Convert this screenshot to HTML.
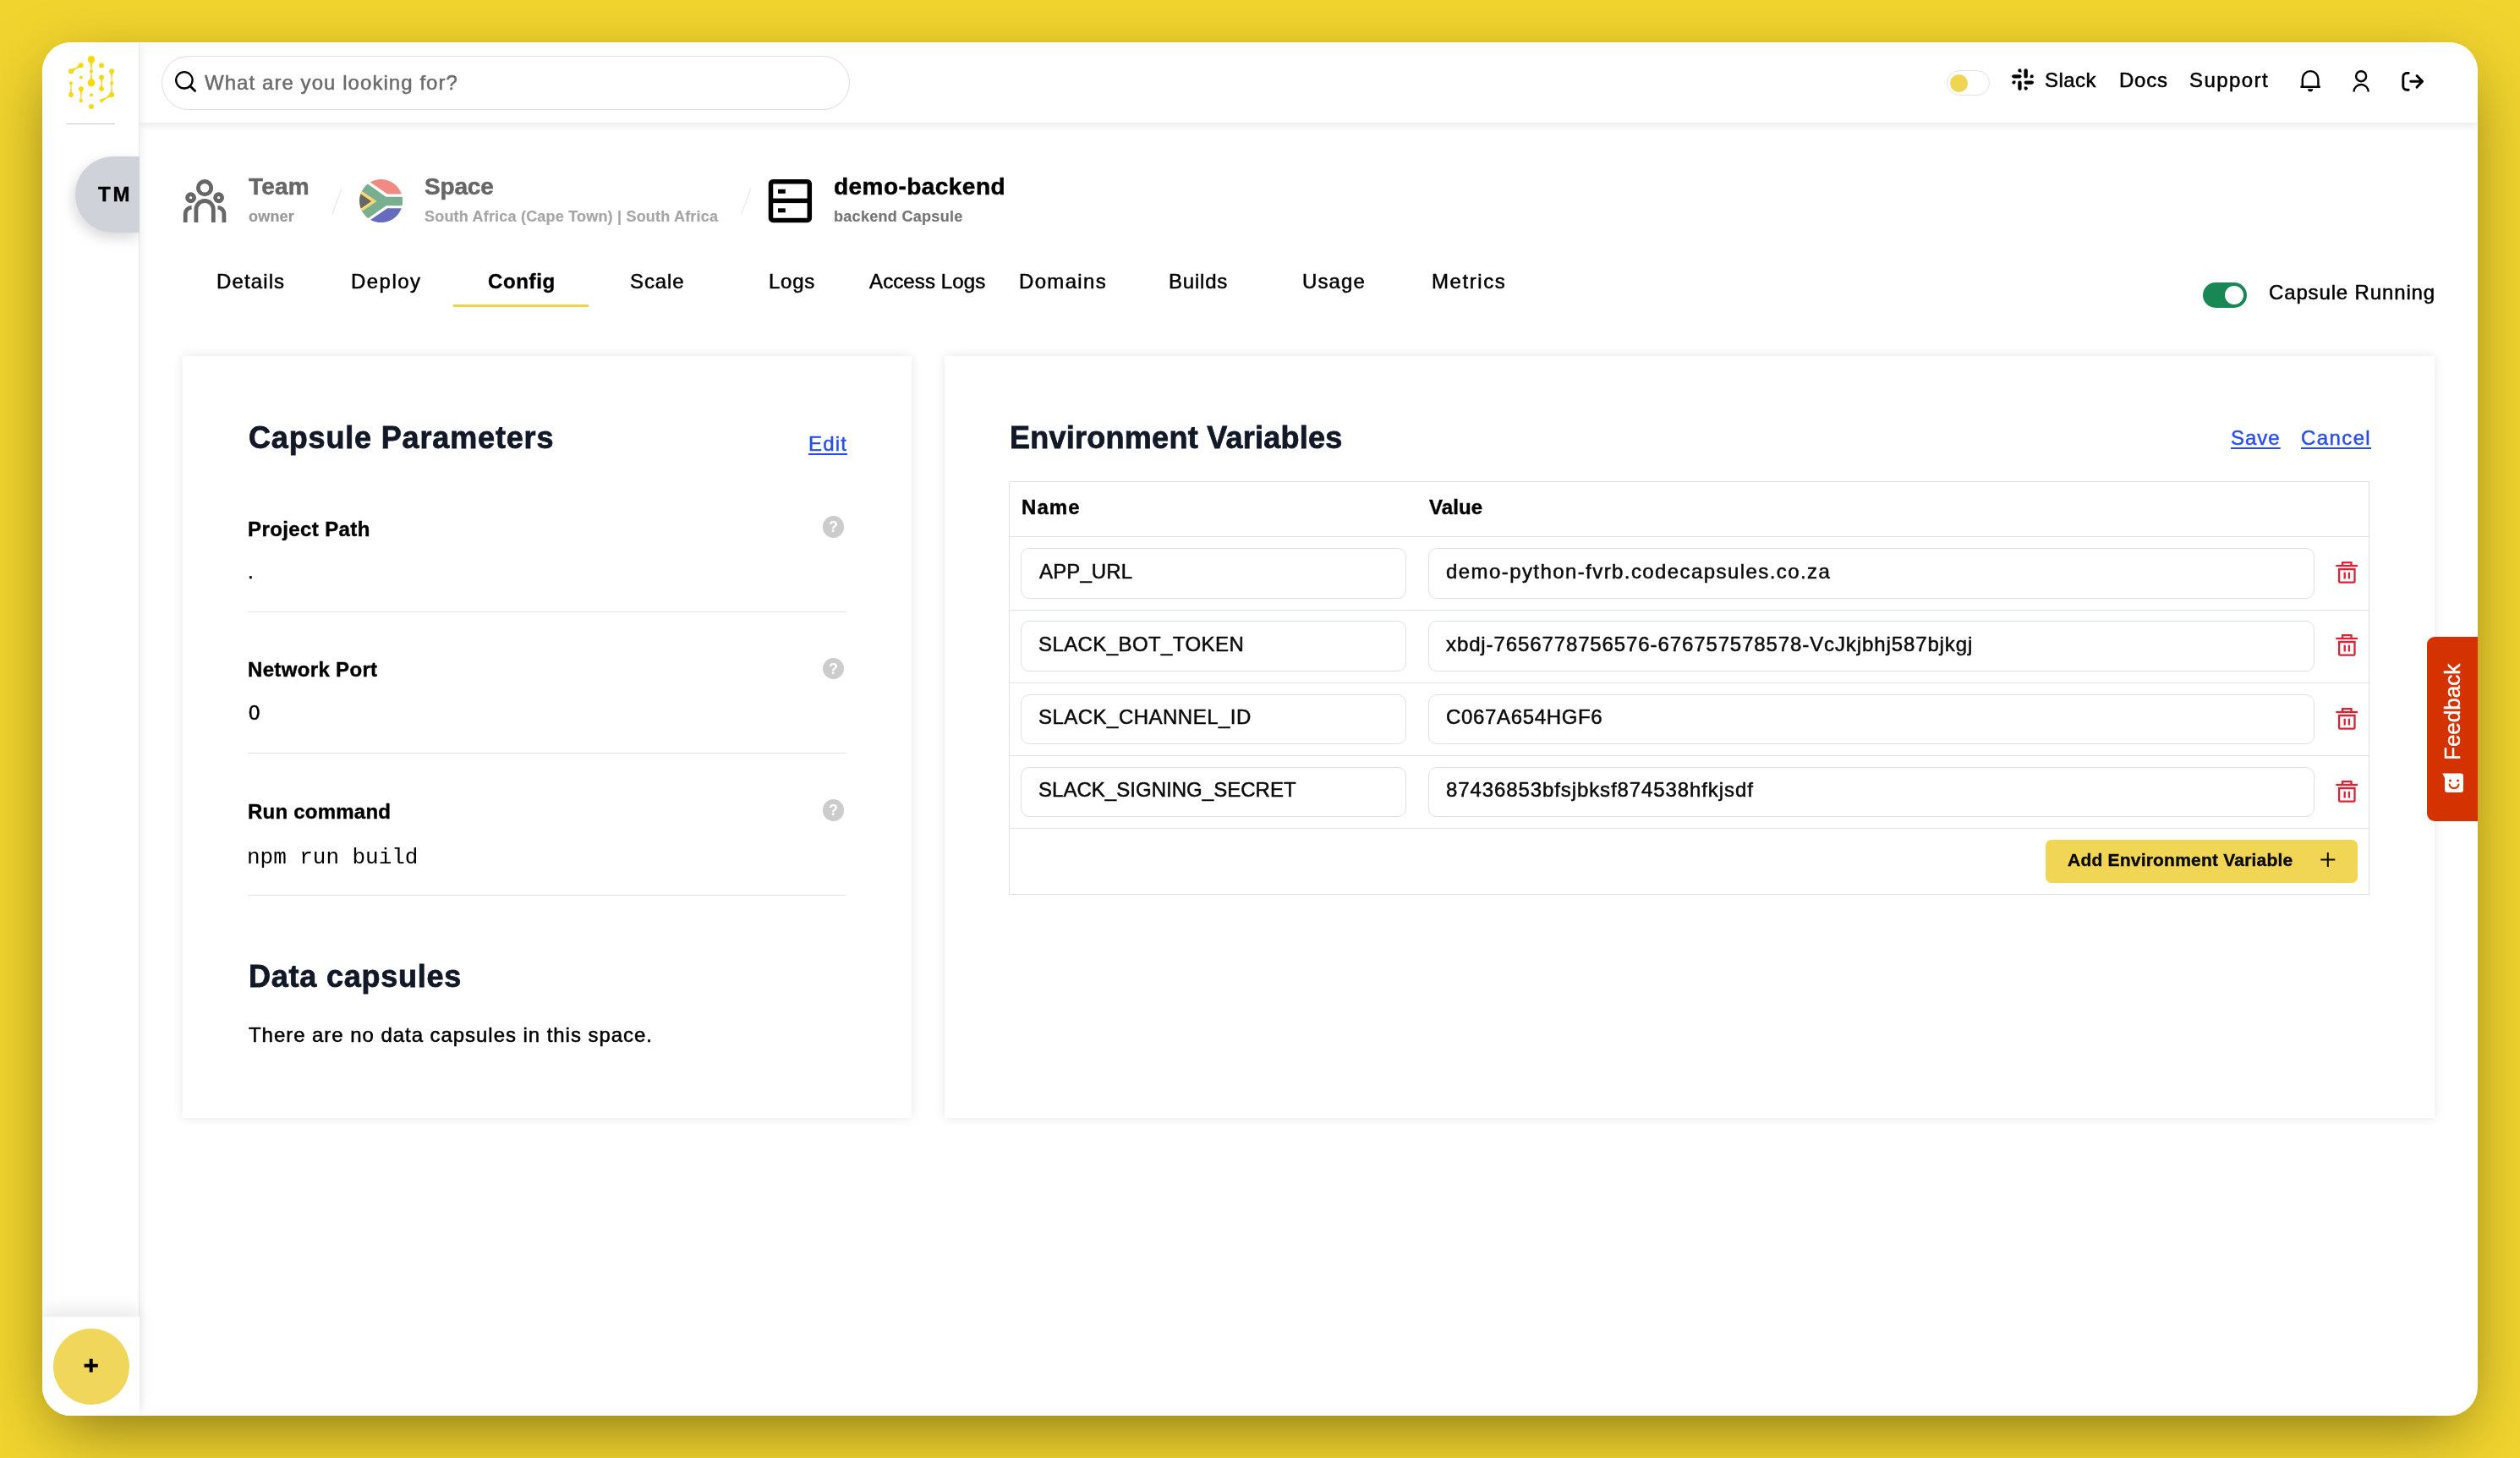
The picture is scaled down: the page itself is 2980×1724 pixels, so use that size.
<!DOCTYPE html>
<html lang="en">
<head>
<meta charset="utf-8">
<title>Code Capsules - demo-backend - Config</title>
<style>
html,body{margin:0;padding:0}
body{width:2980px;height:1724px;overflow:hidden;background:#f1d42e;position:relative;font-family:"Liberation Sans",Arial,sans-serif}
.win{position:absolute;left:50px;top:50px;width:2880px;height:1624px;background:#fff;border-radius:34px;box-shadow:0 24px 80px -16px rgba(0,0,0,.5);overflow:hidden}
.page{will-change:transform;position:absolute;left:-50px;top:-50px;width:2980px;height:1724px}
.page *{box-sizing:border-box}
.a{position:absolute}
.t{z-index:6;position:absolute;margin:0;padding:0;white-space:pre;line-height:1;display:block}
.topbar{left:165px;top:50px;width:2765px;height:95px;background:#fff;box-shadow:0 3px 10px rgba(0,0,0,.10);z-index:2}
.sidebar{left:50px;top:50px;width:115px;height:1624px;background:#fff;border-right:1px solid #e9e9e9;box-shadow:2px 0 9px rgba(0,0,0,.07);z-index:3}
.sfoot{left:50px;top:1557px;width:115px;height:117px;background:#fff;box-shadow:0 -10px 18px rgba(0,0,0,.08);z-index:4}
.z5{z-index:5}
.search{left:191px;top:66px;width:814px;height:64px;border:1px solid #d9dee4;border-radius:32px;background:#fff}
.card{background:#fff;box-shadow:0 0 12px rgba(0,0,0,.10)}
.hr{height:1px;background:#dfe3e8}
.inp{height:60px;border:1px solid #dde1e6;border-radius:10px;background:#fff}
.help{width:25.5px;height:25.5px;border-radius:50%;background:#ccc;color:#fff;font:700 18px/27.5px "Liberation Sans",Arial,sans-serif;text-align:center}

</style>
</head>
<body>
<div class="win"><div class="page">
<!-- main chrome -->
<div class="a topbar"></div>
<div class="a sidebar"></div>
<div class="a sfoot"></div>

<!-- logo -->
<svg class="a z5" style="left:68px;top:56px" width="80" height="80" viewBox="0 0 1458 1458">
 <g stroke="#f3dc55" stroke-width="28" stroke-linecap="round">
  <line x1="728" y1="262" x2="728" y2="765"/><line x1="508" y1="895" x2="508" y2="1150"/>
  <line x1="290" y1="770" x2="290" y2="1020"/><line x1="948" y1="645" x2="948" y2="895"/>
  <line x1="1168" y1="515" x2="1168" y2="1020"/>
 </g>
 <g fill="#f6d915">
  <path d="M531 423.600L405.100 460.300L313 553.600L267 476.400L392.900 439.700L485 346.400Z"/>
  <path d="M1190.900 1058.700L1064.100 1095.300L964.300 1177.600L931.700 1122.400L1051.900 1074.700L1145.100 981.300Z"/>
  <path d="M690 300 L728 470 L766 300Z"/><path d="M690 730 L728 600 L766 730Z"/>
  <path d="M480 930 L508 1040 L536 930Z"/><path d="M920 680 L948 780 L976 680Z"/><path d="M920 860 L948 780 L976 860Z"/>
  <path d="M262 990 L290 890 L318 990Z"/><path d="M1140 550 L1168 650 L1196 550Z"/><path d="M1140 990 L1168 890 L1196 990Z"/>
  <circle cx="728" cy="262" r="78"/><circle cx="728" cy="515" r="36"/><circle cx="728" cy="765" r="80"/>
  <circle cx="728" cy="1025" r="36"/><circle cx="728" cy="1275" r="54"/>
  <circle cx="508" cy="385" r="54"/><circle cx="508" cy="645" r="36"/><circle cx="508" cy="895" r="54"/><circle cx="508" cy="1150" r="38"/>
  <circle cx="290" cy="515" r="54"/><circle cx="290" cy="770" r="38"/><circle cx="290" cy="1020" r="54"/>
  <circle cx="948" cy="390" r="54"/><circle cx="948" cy="645" r="54"/><circle cx="948" cy="895" r="54"/><circle cx="948" cy="1150" r="38"/>
  <circle cx="1168" cy="515" r="54"/><circle cx="1168" cy="770" r="36"/><circle cx="1168" cy="1020" r="54"/>
 </g>
</svg>
<div class="a z5" style="left:79px;top:146px;width:57px;height:1px;background:#c9c9c9"></div>

<!-- team pill -->
<div class="a z5" style="left:50px;top:150px;width:115px;height:180px;overflow:hidden"><div class="a" style="left:39px;top:35px;width:76px;height:90px;background:#cfd2d8;border-radius:45px 0 0 45px;box-shadow:-2px 6px 16px rgba(0,0,0,.16)"></div></div>

<!-- plus button -->
<div class="a z5" style="left:63px;top:1571px;width:90px;height:90px;border-radius:50%;background:#f0d65a"></div>
<svg class="a z5" style="left:99px;top:1606px" width="18" height="18" viewBox="0 0 18 18"><path d="M8.7 .8V16.6M.6 8.7H16.8" stroke="#000" stroke-width="4" fill="none"/></svg>

<!-- search -->
<div class="a search z5"></div>
<svg class="a z5" style="left:204px;top:81px" width="32" height="32" viewBox="0 0 32 32"><circle cx="13.9" cy="13.8" r="9.7" fill="none" stroke="#000" stroke-width="2.3"/><path d="M20.8 20.8L26.6 26.6" stroke="#000" stroke-width="2.8" stroke-linecap="round"/></svg>

<!-- theme toggle -->
<div class="a z5" style="left:2302px;top:83px;width:51px;height:30px;border:1px solid #dfe3ea;border-radius:15px;background:#fff"></div>
<div class="a z5" style="left:2306px;top:88px;width:21px;height:21px;border-radius:50%;background:#efd551"></div>

<!-- slack icon -->
<svg class="a z5" style="left:2378.8px;top:80.8px" width="26" height="26" viewBox="0 0 26 26" fill="#000">
 <rect x="14.4" y=".2" width="4.4" height="11.2" rx="2.2"/>
 <rect x=".1" y="7.2" width="11.4" height="4.2" rx="2.1"/>
 <rect x="7.3" y="14.5" width="4.3" height="11.4" rx="2.15"/>
 <rect x="14.6" y="14.5" width="11.4" height="4.2" rx="2.1"/>
 <path d="M11.5 4.3V2.4a2.1 2.1 0 1 0 -2.1 2.1h2.1z"/>
 <path d="M21.7 11.3h2.1a2.05 2.05 0 1 0 -2.1 -2.05v2.05z"/>
 <path d="M4.5 14.5H2.3a2.05 2.05 0 1 0 2.2 2.05V14.5z"/>
 <path d="M14.6 21.5v2.1a2.1 2.1 0 1 0 2.1 -2.1h-2.1z"/>
</svg>

<!-- bell -->
<svg class="a z5" style="left:2716px;top:78px" width="34" height="34" viewBox="2716 78 34 34" fill="none" stroke="#000" stroke-width="2.4" stroke-linecap="round">
 <path d="M2722.8 102.7V93.4a9.3 9.3 0 0 1 18.6 0V102.7"/><path d="M2721.4 102.7H2742.9"/>
 <path d="M2729 105.2h6.2a3.1 3.1 0 0 1 -6.2 0z" fill="#000" stroke="none"/>
</svg>
<!-- user -->
<svg class="a z5" style="left:2776px;top:78px" width="34" height="34" viewBox="2776 78 34 34" fill="none" stroke="#000" stroke-width="2.4">
 <circle cx="2792.1" cy="90.2" r="6"/><path d="M2783.5 108.6a8.6 8.6 0 0 1 17.2 0"/>
</svg>
<!-- logout -->
<svg class="a z5" style="left:2836px;top:80px" width="34" height="34" viewBox="2836 80 34 34" fill="none" stroke="#000" stroke-width="2.9" stroke-linecap="round" stroke-linejoin="round">
 <path d="M2848.2 86.5H2846a4.2 4.2 0 0 0 -4.2 4.2V102a4.2 4.2 0 0 0 4.2 4.2h2.2"/>
 <path d="M2850.7 96.3H2864.2M2858 89.5L2864.6 96.3L2858 103.1"/>
</svg>

<!-- breadcrumb: team icon -->
<svg class="a" style="left:210px;top:206px" width="64" height="64" viewBox="210 206 64 64" fill="none" stroke="#666" stroke-width="4.8">
 <circle cx="242.06" cy="222.2" r="7.7"/>
 <circle cx="225.6" cy="233.7" r="4.05"/><circle cx="258.6" cy="233.7" r="4.05"/>
 <path d="M231.9 262.9V247.7a10.2 10.2 0 0 1 20.4 0V262.9"/>
 <path d="M226.6 245.4a7.4 7.4 0 0 0 -7.4 7.4V262.9"/>
 <path d="M257.5 245.4a7.4 7.4 0 0 1 7.4 7.4V262.9"/>
</svg>
<svg class="a" style="left:388px;top:218px" width="22" height="40" viewBox="388 218 22 40"><path d="M403.9 223L393 253" stroke="#e2e2e2" stroke-width="1"/></svg>
<svg class="a" style="left:872px;top:218px" width="22" height="40" viewBox="872 218 22 40"><path d="M888 223L876.8 253" stroke="#e2e2e2" stroke-width="1"/></svg>

<!-- flag -->
<svg class="a" style="left:425px;top:211.8px" width="51.2" height="51.2" viewBox="0 0 512 512">
 <defs><clipPath id="fc"><circle cx="256" cy="256" r="256"/></clipPath></defs>
 <g clip-path="url(#fc)">
  <rect width="512" height="512" fill="#fff"/>
  <path d="M131 0H512V174H331L100 16Z" fill="#f08a82"/>
  <path d="M131 512H512V343H331L100 500Z" fill="#676bbd"/>
  <path d="M-40 -40L103 57L314 207H512V313H317L106 460L-40 560L-60 400L142 260L-60 120Z" fill="#78af91"/>
  <path d="M0 120L30.600 140L205 260L30.600 377L0 400V346L14 346L142 260L14 174L0 174Z" fill="#fbd76d"/>
  <path d="M-20 150L142 260L-20 370Z" fill="#666"/>
 </g>
</svg>

<!-- capsule icon -->
<svg class="a" style="left:904px;top:208px" width="60" height="60" viewBox="904 208 60 60">
 <rect x="911.5" y="214.8" width="45.8" height="45.6" rx="2.5" fill="none" stroke="#000" stroke-width="5.5"/>
 <rect x="911.5" y="234.6" width="45.8" height="5.5" fill="#000"/>
 <rect x="920" y="223.8" width="8.8" height="5" fill="#000"/><rect x="920" y="246.3" width="8.8" height="5" fill="#000"/>
</svg>

<!-- tab underline -->
<div class="a" style="left:536px;top:360px;width:160px;height:3px;background:#efd44a"></div>

<!-- running toggle -->
<div class="a" style="left:2605px;top:334px;width:52px;height:30px;border-radius:15px;background:#198754"></div>
<div class="a" style="left:2630.500px;top:338px;width:22px;height:22px;border-radius:50%;background:#fff"></div>

<!-- cards -->
<div class="a card" style="left:216px;top:421px;width:862px;height:900.5px"></div>
<div class="a card" style="left:1117px;top:421px;width:1762px;height:900.5px"></div>

<!-- left card lines + help -->
<div class="a hr" style="left:293px;top:723px;width:708px"></div>
<div class="a hr" style="left:293px;top:890px;width:708px"></div>
<div class="a hr" style="left:293px;top:1058px;width:708px"></div>
<div class="a help" style="left:972.800px;top:610.400px">?</div>
<div class="a help" style="left:972.800px;top:777.800px">?</div>
<div class="a help" style="left:972.800px;top:945.400px">?</div>

<!-- table -->
<div class="a" style="left:1193px;top:569px;width:1609px;height:489px;border:1px solid #dce1e7"></div>
<div class="a hr" style="left:1193px;top:634px;width:1609px"></div>
<div class="a hr" style="left:1193px;top:721px;width:1609px"></div>
<div class="a hr" style="left:1193px;top:807px;width:1609px"></div>
<div class="a hr" style="left:1193px;top:893px;width:1609px"></div>
<div class="a hr" style="left:1193px;top:979px;width:1609px"></div>
<div class="a inp" style="left:1207px;top:648px;width:456px"></div>
<div class="a inp" style="left:1689px;top:648px;width:1048px"></div>
<div class="a inp" style="left:1207px;top:734px;width:456px"></div>
<div class="a inp" style="left:1689px;top:734px;width:1048px"></div>
<div class="a inp" style="left:1207px;top:821px;width:456px;height:59px"></div>
<div class="a inp" style="left:1689px;top:821px;width:1048px;height:59px"></div>
<div class="a inp" style="left:1207px;top:907px;width:456px;height:59px"></div>
<div class="a inp" style="left:1689px;top:907px;width:1048px;height:59px"></div>
<svg class="a" style="left:2760px;top:660px" width="32" height="34" viewBox="2760 660 32 34" fill="none" stroke="#dc2336" stroke-width="2.3">
 <path d="M2762.300 669H2788"/><path d="M2770.1 669V665.1H2780.500V669"/><path d="M2766.100 673H2784.500V687.500a1.200 1.200 0 0 1 -1.200 1.200H2767.300a1.200 1.200 0 0 1 -1.200 -1.200Z"/><path d="M2772.700 676.800V684.600M2777.900 676.800V684.600"/>
</svg>
<svg class="a" style="left:2760px;top:746px" width="32" height="34" viewBox="2760 660 32 34" fill="none" stroke="#dc2336" stroke-width="2.3">
 <path d="M2762.300 669H2788"/><path d="M2770.1 669V665.1H2780.500V669"/><path d="M2766.100 673H2784.500V687.500a1.200 1.200 0 0 1 -1.200 1.200H2767.300a1.200 1.200 0 0 1 -1.200 -1.200Z"/><path d="M2772.700 676.800V684.600M2777.900 676.800V684.600"/>
</svg>
<svg class="a" style="left:2760px;top:833px" width="32" height="34" viewBox="2760 660 32 34" fill="none" stroke="#dc2336" stroke-width="2.3">
 <path d="M2762.300 669H2788"/><path d="M2770.1 669V665.1H2780.500V669"/><path d="M2766.100 673H2784.500V687.500a1.200 1.200 0 0 1 -1.200 1.200H2767.300a1.200 1.200 0 0 1 -1.200 -1.200Z"/><path d="M2772.700 676.800V684.600M2777.900 676.800V684.600"/>
</svg>
<svg class="a" style="left:2760px;top:919.3px" width="32" height="34" viewBox="2760 660 32 34" fill="none" stroke="#dc2336" stroke-width="2.3">
 <path d="M2762.300 669H2788"/><path d="M2770.1 669V665.1H2780.500V669"/><path d="M2766.100 673H2784.500V687.500a1.200 1.200 0 0 1 -1.200 1.200H2767.300a1.200 1.200 0 0 1 -1.200 -1.200Z"/><path d="M2772.700 676.800V684.600M2777.900 676.800V684.600"/>
</svg>
<!-- add button -->
<div class="a" style="left:2419px;top:993px;width:369px;height:51px;border-radius:7px;background:#f0d654"></div>
<svg class="a" style="left:2743px;top:1007px" width="20" height="20" viewBox="0 0 20 20"><path d="M9.800 1V18M1.300 9.500H18.300" stroke="#0b0b0b" stroke-width="2" fill="none"/></svg>
<!-- feedback -->
<div class="a z5" style="left:2869.500px;top:753px;width:70px;height:217.500px;border-radius:9px;background:#d43301"></div>
<div class="a z5" style="left:2887px;top:784.5px;width:26px;height:114px"><span style="position:absolute;left:0;top:114px;transform-origin:0 0;transform:rotate(-90deg);white-space:nowrap;font:400 26px/26px 'Liberation Sans',Arial,sans-serif;color:#fff;-webkit-text-stroke:.4px;display:block;width:114px;height:26px">Feedback</span></div>
<svg class="a z5" style="left:2886px;top:912px" width="30" height="28" viewBox="2886 912 30 28">
 <path d="M2888.300 914.500H2910a3 3 0 0 1 3 3V934a3 3 0 0 1 -3 3H2894a3 3 0 0 1 -3 -3V920Z" fill="#fff"/>
 <circle cx="2897.500" cy="923" r="1.600" fill="#d43301"/><circle cx="2906.500" cy="923" r="1.600" fill="#d43301"/>
 <path d="M2896.500 927.500a5.600 5.600 0 0 0 11 0" fill="none" stroke="#d43301" stroke-width="2" stroke-linecap="round"/>
</svg>

<span class="t" style="left:242px;top:86px;font:400 24px/1 'Liberation Sans', Arial, sans-serif;color:#6b6b6b;letter-spacing:1.06px;-webkit-text-stroke:0.5px;">What are you looking for?</span>
<span class="t" style="left:2418px;top:83px;font:400 24px/1 'Liberation Sans', Arial, sans-serif;color:#000;letter-spacing:0.44px;-webkit-text-stroke:0.5px;">Slack</span>
<span class="t" style="left:2506px;top:83px;font:400 24px/1 'Liberation Sans', Arial, sans-serif;color:#000;letter-spacing:0.75px;-webkit-text-stroke:0.5px;">Docs</span>
<span class="t" style="left:2589px;top:83px;font:400 24px/1 'Liberation Sans', Arial, sans-serif;color:#000;letter-spacing:1.42px;-webkit-text-stroke:0.5px;">Support</span>
<span class="t" style="left:116px;top:218px;font:700 24px/1 'Liberation Sans', Arial, sans-serif;color:#000;letter-spacing:2.75px;-webkit-text-stroke:0.4px;">TM</span>
<span class="t" style="left:294px;top:207px;font:700 28px/1 'Liberation Sans', Arial, sans-serif;color:#666;letter-spacing:0.17px;-webkit-text-stroke:0.5px;">Team</span>
<span class="t" style="left:294px;top:247px;font:700 18px/1 'Liberation Sans', Arial, sans-serif;color:#999;letter-spacing:0.19px;-webkit-text-stroke:0.2px;">owner</span>
<span class="t" style="left:502px;top:207px;font:700 28px/1 'Liberation Sans', Arial, sans-serif;color:#666;letter-spacing:-0.19px;-webkit-text-stroke:0.5px;">Space</span>
<span class="t" style="left:502px;top:247px;font:700 18px/1 'Liberation Sans', Arial, sans-serif;color:#a6a6a6;letter-spacing:0.2px;-webkit-text-stroke:0.2px;">South Africa (Cape Town) | South Africa</span>
<span class="t" style="left:986px;top:207px;font:700 28px/1 'Liberation Sans', Arial, sans-serif;color:#000;letter-spacing:0.45px;-webkit-text-stroke:0.5px;">demo-backend</span>
<span class="t" style="left:986px;top:247px;font:700 18px/1 'Liberation Sans', Arial, sans-serif;color:#757575;letter-spacing:0.3px;-webkit-text-stroke:0.2px;">backend Capsule</span>
<span class="t" style="left:256px;top:321px;font:400 24px/1 'Liberation Sans', Arial, sans-serif;color:#000;letter-spacing:1.12px;-webkit-text-stroke:0.5px;">Details</span>
<span class="t" style="left:415px;top:321px;font:400 24px/1 'Liberation Sans', Arial, sans-serif;color:#000;letter-spacing:1.45px;-webkit-text-stroke:0.5px;">Deploy</span>
<span class="t" style="left:577px;top:321px;font:700 24px/1 'Liberation Sans', Arial, sans-serif;color:#000;letter-spacing:0.65px;-webkit-text-stroke:0.4px;">Config</span>
<span class="t" style="left:745px;top:321px;font:400 24px/1 'Liberation Sans', Arial, sans-serif;color:#000;letter-spacing:0.88px;-webkit-text-stroke:0.5px;">Scale</span>
<span class="t" style="left:909px;top:321px;font:400 24px/1 'Liberation Sans', Arial, sans-serif;color:#000;letter-spacing:0.75px;-webkit-text-stroke:0.5px;">Logs</span>
<span class="t" style="left:1028px;top:321px;font:400 24px/1 'Liberation Sans', Arial, sans-serif;color:#000;letter-spacing:0.12px;-webkit-text-stroke:0.5px;">Access Logs</span>
<span class="t" style="left:1205px;top:321px;font:400 24px/1 'Liberation Sans', Arial, sans-serif;color:#000;letter-spacing:1.33px;-webkit-text-stroke:0.5px;">Domains</span>
<span class="t" style="left:1382px;top:321px;font:400 24px/1 'Liberation Sans', Arial, sans-serif;color:#000;letter-spacing:0.8px;-webkit-text-stroke:0.5px;">Builds</span>
<span class="t" style="left:1540px;top:321px;font:400 24px/1 'Liberation Sans', Arial, sans-serif;color:#000;letter-spacing:1.12px;-webkit-text-stroke:0.5px;">Usage</span>
<span class="t" style="left:1693px;top:321px;font:400 24px/1 'Liberation Sans', Arial, sans-serif;color:#000;letter-spacing:1.58px;-webkit-text-stroke:0.5px;">Metrics</span>
<span class="t" style="left:2683px;top:334px;font:400 24px/1 'Liberation Sans', Arial, sans-serif;color:#000;letter-spacing:0.86px;-webkit-text-stroke:0.5px;">Capsule Running</span>
<h2 class="t" style="left:294px;top:500px;font:700 36px/1 'Liberation Sans', Arial, sans-serif;color:#111827;letter-spacing:0.84px;-webkit-text-stroke:0.8px;">Capsule Parameters</h2>
<a class="t" style="left:956px;top:513px;font:400 24px/1 'Liberation Sans', Arial, sans-serif;color:#2a4fe8;letter-spacing:1.17px;-webkit-text-stroke:0.5px;text-decoration:underline;text-decoration-thickness:2px;text-underline-offset:3px;">Edit</a>
<span class="t" style="left:293px;top:614px;font:700 24px/1 'Liberation Sans', Arial, sans-serif;color:#000;letter-spacing:0.39px;-webkit-text-stroke:0.4px;">Project Path</span>
<span class="t" style="left:293px;top:664px;font:400 24px/1 'Liberation Sans', Arial, sans-serif;color:#000;letter-spacing:0px;-webkit-text-stroke:0.5px;">.</span>
<span class="t" style="left:293px;top:780px;font:700 24px/1 'Liberation Sans', Arial, sans-serif;color:#000;letter-spacing:0.34px;-webkit-text-stroke:0.4px;">Network Port</span>
<span class="t" style="left:294px;top:831px;font:400 24px/1 'Liberation Sans', Arial, sans-serif;color:#000;letter-spacing:0px;-webkit-text-stroke:0.5px;">0</span>
<span class="t" style="left:293px;top:948px;font:700 24px/1 'Liberation Sans', Arial, sans-serif;color:#000;letter-spacing:0.23px;-webkit-text-stroke:0.4px;">Run command</span>
<span class="t" style="left:292px;top:1001px;font:400 26px/1 'Liberation Mono', monospace;color:#000;letter-spacing:-0.04px;">npm run build</span>
<h2 class="t" style="left:294px;top:1137px;font:700 36px/1 'Liberation Sans', Arial, sans-serif;color:#111827;letter-spacing:0.77px;-webkit-text-stroke:0.8px;">Data capsules</h2>
<span class="t" style="left:294px;top:1212px;font:400 24px/1 'Liberation Sans', Arial, sans-serif;color:#000;letter-spacing:0.95px;-webkit-text-stroke:0.5px;">There are no data capsules in this space.</span>
<h2 class="t" style="left:1194px;top:500px;font:700 36px/1 'Liberation Sans', Arial, sans-serif;color:#111827;letter-spacing:0.26px;-webkit-text-stroke:0.8px;">Environment Variables</h2>
<a class="t" style="left:2638px;top:506px;font:400 24px/1 'Liberation Sans', Arial, sans-serif;color:#2a4fe8;letter-spacing:1.0px;-webkit-text-stroke:0.5px;text-decoration:underline;text-decoration-thickness:2px;text-underline-offset:3px;">Save</a>
<a class="t" style="left:2721px;top:506px;font:400 24px/1 'Liberation Sans', Arial, sans-serif;color:#2a4fe8;letter-spacing:1.4px;-webkit-text-stroke:0.5px;text-decoration:underline;text-decoration-thickness:2px;text-underline-offset:3px;">Cancel</a>
<span class="t" style="left:1208px;top:588px;font:700 24px/1 'Liberation Sans', Arial, sans-serif;color:#000;letter-spacing:1.08px;-webkit-text-stroke:0.4px;">Name</span>
<span class="t" style="left:1690px;top:588px;font:700 24px/1 'Liberation Sans', Arial, sans-serif;color:#000;letter-spacing:0.12px;-webkit-text-stroke:0.4px;">Value</span>
<span class="t" style="left:1229px;top:664px;font:400 24px/1 'Liberation Sans', Arial, sans-serif;color:#0b0b0b;letter-spacing:0.12px;-webkit-text-stroke:0.5px;">APP_URL</span>
<span class="t" style="left:1710px;top:664px;font:400 24px/1 'Liberation Sans', Arial, sans-serif;color:#0b0b0b;letter-spacing:1.42px;-webkit-text-stroke:0.5px;">demo-python-fvrb.codecapsules.co.za</span>
<span class="t" style="left:1228px;top:750px;font:400 24px/1 'Liberation Sans', Arial, sans-serif;color:#0b0b0b;letter-spacing:0.41px;-webkit-text-stroke:0.5px;">SLACK_BOT_TOKEN</span>
<span class="t" style="left:1710px;top:750px;font:400 24px/1 'Liberation Sans', Arial, sans-serif;color:#0b0b0b;letter-spacing:0.89px;-webkit-text-stroke:0.5px;">xbdj-7656778756576-676757578578-VcJkjbhj587bjkgj</span>
<span class="t" style="left:1228px;top:836px;font:400 24px/1 'Liberation Sans', Arial, sans-serif;color:#0b0b0b;letter-spacing:0.48px;-webkit-text-stroke:0.5px;">SLACK_CHANNEL_ID</span>
<span class="t" style="left:1710px;top:836px;font:400 24px/1 'Liberation Sans', Arial, sans-serif;color:#0b0b0b;letter-spacing:0.66px;-webkit-text-stroke:0.5px;">C067A654HGF6</span>
<span class="t" style="left:1228px;top:922px;font:400 24px/1 'Liberation Sans', Arial, sans-serif;color:#0b0b0b;letter-spacing:0.03px;-webkit-text-stroke:0.5px;">SLACK_SIGNING_SECRET</span>
<span class="t" style="left:1710px;top:922px;font:400 24px/1 'Liberation Sans', Arial, sans-serif;color:#0b0b0b;letter-spacing:0.9px;-webkit-text-stroke:0.5px;">87436853bfsjbksf874538hfkjsdf</span>
<span class="t" style="left:2445px;top:1006px;font:700 21px/1 'Liberation Sans', Arial, sans-serif;color:#0b0b0b;letter-spacing:0.21px;-webkit-text-stroke:0.4px;">Add Environment Variable</span>
</div></div>
</body>
</html>
